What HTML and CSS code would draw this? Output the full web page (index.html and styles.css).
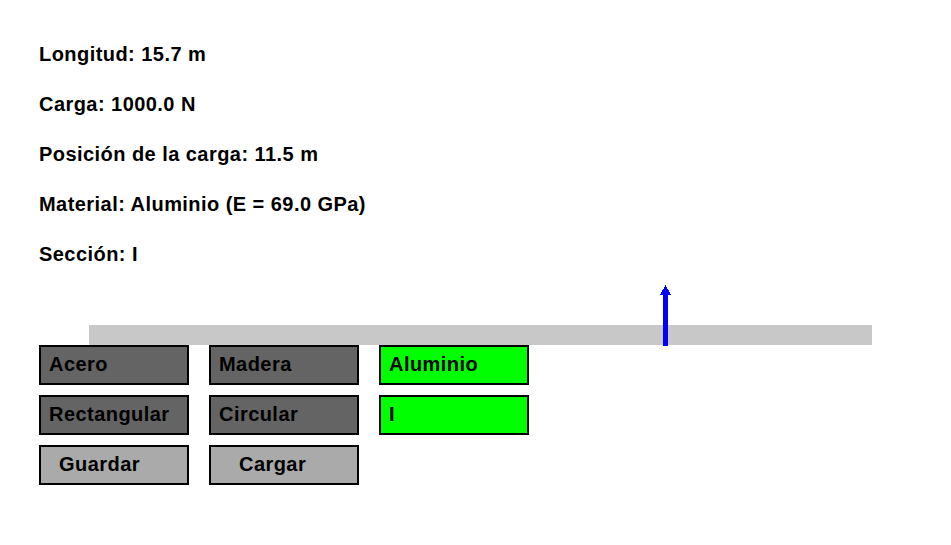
FILE: index.html
```html
<!DOCTYPE html>
<html lang="es">
<head>
    <meta charset="UTF-8">
    <meta name="viewport" content="width=device-width, initial-scale=1.0">
    <title>Viga</title>
    <link rel="stylesheet" href="styles.css">
</head>
<body>
    <!-- Datos de la viga -->
    <div class="info">
        <p>Longitud: 15.7 m</p>
        <p>Carga: 1000.0 N</p>
        <p>Posición de la carga: 11.5 m</p>
        <p>Material: Aluminio (E = 69.0 GPa)</p>
        <p>Sección: I</p>
    </div>

    <!-- Dibujo de la viga -->
    <div class="scene">
        <div class="beam">
            <svg class="load-arrow" style="left: calc(73.25% - 3px)" width="11" height="61" viewBox="0 0 11 61" shape-rendering="crispEdges">
                <polygon points="0,10 11,10 5.5,0" fill="#0000ff"/>
                <rect x="3" y="10" width="5" height="51" fill="#0000ff"/>
            </svg>
        </div>
    </div>

    <!-- Botones -->
    <div class="controls">
        <button class="btn dark">Acero</button>
        <button class="btn dark">Madera</button>
        <button class="btn active">Aluminio</button>
        <button class="btn dark">Rectangular</button>
        <button class="btn dark">Circular</button>
        <button class="btn active">I</button>
        <button class="btn light save">Guardar</button>
        <button class="btn light load">Cargar</button>
    </div>
</body>
</html>
```

FILE: styles.css
```css
* {
    margin: 0;
    box-sizing: border-box;
}
body {
    background-color: #ffffff;
    font-family: "Liberation Sans", Arial, sans-serif;
    font-weight: bold;
    font-size: 20px;
    letter-spacing: 0.45px;
    color: #000000;
    overflow: hidden;
}

.info {
    padding-top: 29px;
    padding-left: 39px;
}
.info p {
    line-height: 50px;
    height: 50px;
}

.scene {
    padding-top: 46px;
}
.beam {
    position: relative;
    margin-left: 89px;
    width: 783px;
    height: 20px;
    background-color: #c8c8c8;
}
.load-arrow {
    position: absolute; /* sits on top of the beam */
    bottom: -1px;
    display: block;
}

.controls {
    display: grid;
    grid-template-columns: repeat(3, 150px);
    column-gap: 20px;
    row-gap: 10px;
    padding-left: 39px;
}
.btn {
    width: 150px;
    height: 40px;
    border: 2px solid #000000;
    font-family: inherit;
    font-weight: bold;
    font-size: 20px;
    letter-spacing: 0.45px;
    line-height: 34px;
    color: #000000;
    text-align: left;
    padding: 0 0 2px 8px;
    border-radius: 0;
    cursor: pointer;
}
.dark {
    background-color: #646464;
}
.light {
    background-color: #aaaaaa;
}
.active {
    background-color: #00ff00;
}
.save {
    padding-left: 18px;
}
.load {
    padding-left: 28px;
}
```
